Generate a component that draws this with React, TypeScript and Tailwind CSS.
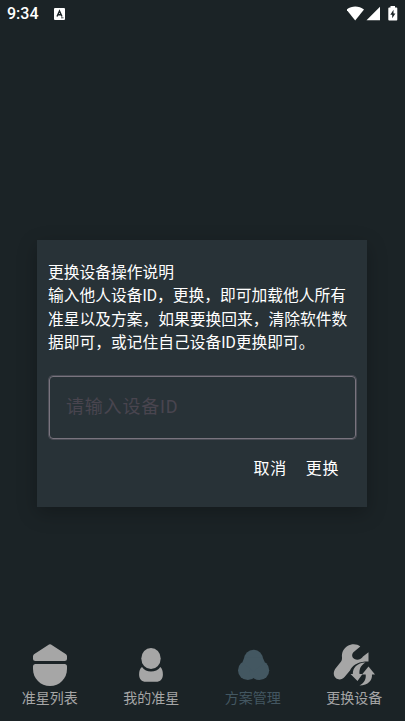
import { useState } from 'react'
import type { ReactNode } from 'react'
import clsx from 'clsx'

const TABS: { id: string; label: string; icon: ReactNode }[] = [
  {
    id: 'list',
    label: '准星列表',
    icon: (
      <>
        <path d="M19 2.5Q20 1.8 21 2.5L36 12.3Q37 13 37 14.5V16.5Q37 19 34.5 19H5.5Q3 19 3 16.5V14.5Q3 13 4 12.3Z" />
        <path d="M5.5 22H34.5Q37 22 37 24.5V27C37 36.5 29.5 44 20 44S3 36.5 3 27V24.5Q3 22 5.5 22Z" />
      </>
    ),
  },
  {
    id: 'mine',
    label: '我的准星',
    icon: (
      <>
        <ellipse cx="20" cy="16.5" rx="9.7" ry="10.5" />
        <path d="M11 25C13 28 16.5 29.5 20 29.5S27.5 28 29.3 25C31 26.5 31.9 29 31.9 32.5C31.9 37 29.5 39.8 25 39.8H15C10.5 39.8 8.1 37 8.1 32.5C8.1 29 9 26.5 11 25Z" />
      </>
    ),
  },
  {
    id: 'plans',
    label: '方案管理',
    icon: (
      <>
        <circle cx="20.5" cy="17.2" r="9.4" />
        <circle cx="14.8" cy="28.2" r="9.8" />
        <circle cx="26.4" cy="28.2" r="9.8" />
        <path d="M11.3 15.5L9.5 20L20.5 30L31.700 20L29.700 15.500Z" />
        <path d="M17 34H24V36.500L20.600 35.500L17 36.500Z" />
      </>
    ),
  },
  {
    id: 'device',
    label: '更换设备',
    icon: (
      <>
        <path d="M26.3 4.6C23 1.5 17.5 1.5 13.5 4C9.5 6.5 7.5 10.5 8 15.5C8.1 18 7.5 19.5 5.5 21.5L1.5 26.5C-.8 29.5-.8 33.5 1.8 36C4.5 38.3 8.2 37.8 10.5 35L16 28.5C18 23.5 23 20.2 31 19.4H34.5V10.2L29 14.5C27.5 17.2 23.5 18.6 20.5 17C17.5 15.3 17.5 12 20 9.8Z" />
        <path d="M31.5 20.5C23 21 18.8 25.5 18.8 32H16.5L23.5 39L28.5 32H25.5C25 27 27 23 31.5 20.5Z" />
        <path d="M25.5 43.5C34.5 43 38.3 38.5 38 32.5H41L34.5 24.5L28 32.5H31.7C32.3 37.5 30 41 25.5 43.5Z" />
      </>
    ),
  },
]

function StatusBar() {
  return (
    <header className="flex h-7 items-center px-[7px] text-white">
      <span className="text-[16px] font-medium leading-7">9:34</span>
      <svg className="ml-[15px]" width="11" height="12" viewBox="0 0 11 12">
        <rect width="11" height="12" rx="1" fill="currentColor" />
        <path d="M3 8.5L5.5 3L8 8.5M4 6.8H7" fill="none" stroke="#1b2326" strokeWidth="1.4" />
        <path d="M7 9.8H9.5" stroke="#1b2326" strokeWidth=".8" />
      </svg>
      <svg className="ml-auto" width="51" height="16" viewBox="0 0 51 16" fill="currentColor">
        <path d="M-.5 3.6C4.5-.4 12-.4 17 3.6L8.2 14.5Z" />
        <path d="M33 .8V14.3H19.5Z" />
        <path d="M42.2 1.5H43.500V0H48V1.500H49.500Q50.300 1.500 50.300 2.500V13.500Q50.300 14.500 49.500 14.500H42.200Q41.300 14.500 41.300 13.500V2.500Q41.300 1.500 42.200 1.500Z" />
        <path d="M46.500 3.800L43.300 8.700H45.200V12.300L48.400 7.500H46.500Z" fill="#1b2326" />
      </svg>
    </header>
  )
}

function DeviceDialog() {
  const [deviceId, setDeviceId] = useState('')

  return (
    <section className="ml-[37px] mt-[212px] h-[267px] w-[330px] bg-[#283237] px-[11px] pt-[21px] shadow-[0_6px_18px_rgba(0,0,0,0.25)]">
      <p className="whitespace-nowrap text-[15.75px] leading-[23.4px] text-white">
        更换设备操作说明
        <br />
        输入他人设备ID，更换，即可加载他人所有
        <br />
        准星以及方案，如果要换回来，清除软件数
        <br />
        据即可，或记住自己设备ID更换即可。
      </p>
      <input
        value={deviceId}
        onChange={(e) => setDeviceId(e.target.value)}
        placeholder="请输入设备ID"
        className="ml-px mt-[21px] block h-[63px] w-[307px] rounded-[4px] border border-[#79747e] px-[16px] pb-[2px] text-[18px] tracking-[0.8px] text-white shadow-[0_0_0_1px_#4a4c55] outline-none placeholder:text-[#49454f]"
      />
      <div className="mt-[18px] flex justify-end gap-[19px] pr-[17px] text-[16px] leading-6 tracking-[0.6px] text-white">
        <button>取消</button>
        <button>更换</button>
      </div>
    </section>
  )
}

export default function App() {
  const [active, setActive] = useState('plans')

  return (
    <div className="flex h-[721px] w-[405px] flex-col overflow-hidden bg-[#1b2326] font-[Roboto,'Noto_Sans_CJK_SC',sans-serif]">
      <StatusBar />
      <DeviceDialog />

      {/* Bottom navigation */}
      <nav className="-ml-px mt-auto flex h-[79px] w-[406px]">
        {TABS.map((tab) => (
          <button
            key={tab.id}
            onClick={() => setActive(tab.id)}
            className={clsx(
              'flex flex-1 flex-col items-center justify-start',
              active === tab.id ? 'text-[#435761]' : 'text-[#a6a6a6]'
            )}
          >
            <svg className="overflow-visible" width="40" height="46" viewBox="0 0 40 46" fill="currentColor">
              {tab.icon}
            </svg>
            <span className="text-[14px] leading-[20px]">{tab.label}</span>
          </button>
        ))}
      </nav>
    </div>
  )
}
